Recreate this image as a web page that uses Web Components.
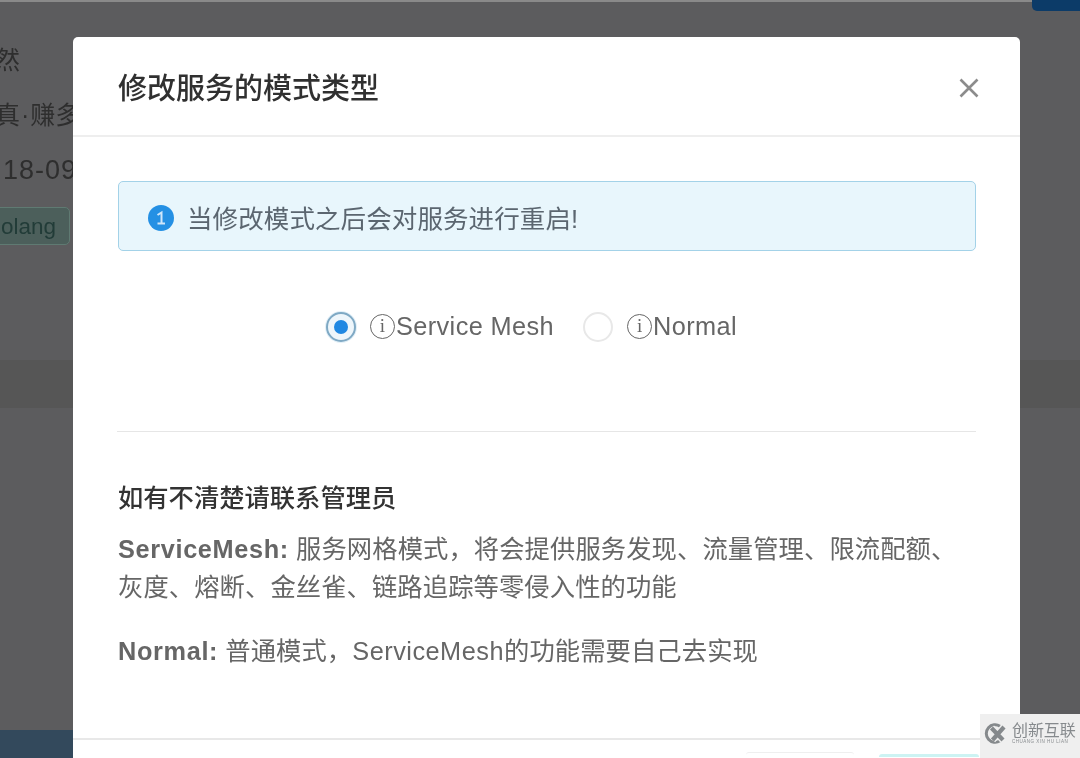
<!DOCTYPE html>
<html lang="zh-CN">

<head>
  <meta charset="UTF-8">
  <title>修改服务的模式类型</title>
  <style>
    html, body { margin: 0; height: 100%; }
    body { font-family: "Liberation Sans", "Noto Sans CJK SC", sans-serif; overflow: hidden; }
    p { letter-spacing: .1px; }
    b { letter-spacing: .65px; }
    i { font-style: normal; letter-spacing: .5px; }
  </style>
</head>

<body>
  <page-backdrop>
    <mode-dialog heading="修改服务的模式类型">
      <info-alert>当修改模式之后会对服务进行重启!</info-alert>
      <mode-radio checked>Service Mesh</mode-radio>
      <mode-radio>Normal</mode-radio>
      <h4 slot="help">如有不清楚请联系管理员</h4>
      <p slot="help"><b>ServiceMesh:</b> 服务网格模式&#xFF0C;将会提供服务发现、流量管理、限流配额、灰度、熔断、金丝雀、链路追踪等零侵入性的功能</p>
      <p slot="help"><b>Normal:</b> 普通模式&#xFF0C;<i>ServiceMesh</i>的功能需要自己去实现</p>
    </mode-dialog>
    <water-mark></water-mark>
  </page-backdrop>

  <script>
    class PageBackdrop extends HTMLElement {
      constructor() {
        super()
        this.attachShadow({ mode: 'open' }).innerHTML = `
          <style>
            :host { display: block; position: relative; width: 1080px; height: 758px; overflow: hidden; background: #5c5c5e; color: #2e2e2e; font-size: 25px; filter: blur(.4px); }
            .top { height: 2px; background: #8a8a8a; }
            .tab { position: absolute; top: 0; right: 0; width: 48px; height: 11px; background: #0c3b68; border-radius: 0 0 0 5px; }
            .band { position: absolute; left: 0; right: 0; top: 360px; height: 48px; background: #565656; }
            .lines { position: relative; width: 73px; overflow: hidden; white-space: nowrap; display: flex; flex-direction: column; padding-top: 40px; }
            .line { height: 55px; line-height: 36px; }
            .dot { margin: 0 1px; }
            .tag { align-self: flex-start; box-sizing: border-box; margin: 0 0 0 -30px; height: 38px; line-height: 38px; font-size: 22.5px; padding: 0 13px 0 30px; border: 1px solid #5f7a72; border-radius: 5px; background: #4c5f5b; color: #223c38; }
            .bar { position: absolute; left: 0; bottom: 0; width: 73px; height: 28px; background: #33495c; }
          </style>
          <div class="top"></div>
          <div class="tab"></div>
          <div class="band"></div>
          <div class="lines">
            <div class="line" style="margin-left:-5px">然</div>
            <div class="line" style="margin-left:-5px">真<span class="dot">·</span>赚多</div>
            <div class="line" style="margin-left:3px;font-size:27px;letter-spacing:1px">18-09</div>
            <div class="tag">olang</div>
          </div>
          <div class="bar"></div>
          <slot></slot>`
      }
    }

    class ModeDialog extends HTMLElement {
      constructor() {
        super()
        this.attachShadow({ mode: 'open' }).innerHTML = `
          <style>
            :host { display: flex; flex-direction: column; position: absolute; left: 73px; top: 37px; width: 947px; height: 740px; box-sizing: border-box; background: #fff; border-radius: 5px; }
            header { flex: none; display: flex; align-items: center; justify-content: space-between; height: 98px; padding: 0 40px 0 45px; border-bottom: 2px solid #eeeeee; }
            h3 { margin: 0; font-size: 29px; font-weight: 500; color: #303030; }
            svg { display: block; margin-top: 4px; }
            main { padding: 44px 44px 0 45px; }
            .modes { display: flex; justify-content: center; gap: 29px; margin: 53px 0 0; height: 44px; align-items: center; padding-right: 31px; }
            hr { border: 0; height: 1px; background: #e6e6e6; margin: 83px 0 0 -1px; }
            .help { margin-top: 49px; }
            ::slotted(h4) { margin: 0 0 15px; font-size: 25.3px; line-height: 34px; font-weight: 500; color: #333; }
            ::slotted(p) { margin: 0 0 26px; font-size: 25.3px; line-height: 38px; color: #666; }
            footer { position: absolute; left: 0; right: 0; top: 701px; border-top: 2px solid #e8e8e8; height: 30px; display: flex; justify-content: flex-end; gap: 25px; padding: 12px 41px 0 0; }
            .btn { width: 108px; height: 20px; border-top: 1px solid #efefef; border-radius: 3px; }
            .btn.primary { width: 100px; margin-top: 2px; border-top: 3px solid #cdf3f3; }
          </style>
          <header>
            <h3></h3>
            <svg width="22" height="22" viewBox="0 0 22 22"><path d="M2.5 2.5 L19.5 19.5 M19.5 2.5 L2.5 19.5" stroke="#8c8c8c" stroke-width="2.6" fill="none"/></svg>
          </header>
          <main>
            <slot></slot>
            <div class="modes"><slot name="modes"></slot></div>
            <hr>
            <div class="help"><slot name="help"></slot></div>
          </main>
          <footer><div class="btn"></div><div class="btn primary"></div></footer>`
        this.shadowRoot.querySelector('h3').textContent = this.getAttribute('heading') || ''
      }

      connectedCallback() {
        this.querySelectorAll('mode-radio').forEach((r) => r.setAttribute('slot', 'modes'))
      }
    }

    class InfoAlert extends HTMLElement {
      constructor() {
        super()
        this.attachShadow({ mode: 'open' }).innerHTML = `
          <style>
            :host { display: flex; align-items: center; gap: 13px; box-sizing: border-box; height: 70px; padding: 0 29px; background: #e8f6fc; border: 1px solid #a3d2e8; border-radius: 5px; color: #5b6670; font-size: 25.5px; letter-spacing: .1px; }
            svg { flex: none; display: block; margin-top: 4px; }
          </style>
          <svg width="26" height="26" viewBox="0 0 26 26">
            <circle cx="13" cy="13" r="13" fill="#2490e4"/>
            <path d="M9.5 10 L13.5 7.5 V18.5 M9.5 18.5 H17" stroke="#cfe6fa" stroke-width="2" fill="none"/>
          </svg>
          <span><slot></slot></span>`
      }
    }

    class ModeRadio extends HTMLElement {
      constructor() {
        super()
        this.attachShadow({ mode: 'open' }).innerHTML = `
          <style>
            :host { display: inline-flex; align-items: center; gap: 14px; font-size: 25.3px; letter-spacing: .4px; color: #666; white-space: nowrap; }
            .dot { box-sizing: border-box; width: 30px; height: 30px; margin-top: 2px; border-radius: 50%; border: 2px solid #e8e8e8; display: flex; align-items: center; justify-content: center; }
            :host([checked]) .dot { border-color: #7fa9c4; box-shadow: 0 0 0 1px #e3f0f8; background: #eef6fb; }
            :host([checked]) .dot::after { content: ""; width: 14px; height: 14px; border-radius: 50%; background: #2088e2; }
            .label { display: inline-flex; align-items: center; }
            .i { box-sizing: border-box; width: 25px; height: 25px; margin-right: 1px; border: 1.5px solid #666; border-radius: 50%; font: 19px/22px "Liberation Serif", serif; text-align: center; letter-spacing: 0; }
          </style>
          <span class="dot"></span>
          <span class="label"><span class="i">i</span><span><slot></slot></span></span>`
      }
    }

    class WaterMark extends HTMLElement {
      constructor() {
        super()
        this.attachShadow({ mode: 'open' }).innerHTML = `
          <style>
            :host { display: flex; align-items: center; gap: 4px; box-sizing: border-box; position: absolute; right: 0; bottom: 0; width: 100px; height: 44px; padding: 0 0 6px 3px; background: #efefef; color: #868a8d; }
            svg { flex: none; display: block; }
            .name { font-size: 16px; line-height: 17px; letter-spacing: -.1px; white-space: nowrap; }
            .sub { font-size: 4.5px; line-height: 5px; letter-spacing: .5px; white-space: nowrap; }
          </style>
          <svg width="25" height="21" viewBox="0 0 25 21">
            <path d="M17 3.2 A8.8 8.8 0 1 0 17 17.8" stroke="#85898c" stroke-width="3" fill="none"/>
            <path d="M8.5 5 L20 17 M21 4 L9.5 17" stroke="#efefef" stroke-width="7" fill="none"/>
            <path d="M8.5 5 L20 17 M21 4 L9.5 17" stroke="#85898c" stroke-width="4.2" fill="none"/>
          </svg>
          <div><div class="name">创新互联</div><div class="sub">CHUANG XIN HU LIAN</div></div>`
      }
    }

    window.customElements.define('page-backdrop', PageBackdrop)
    window.customElements.define('mode-dialog', ModeDialog)
    window.customElements.define('info-alert', InfoAlert)
    window.customElements.define('mode-radio', ModeRadio)
    window.customElements.define('water-mark', WaterMark)
  </script>
</body>

</html>
